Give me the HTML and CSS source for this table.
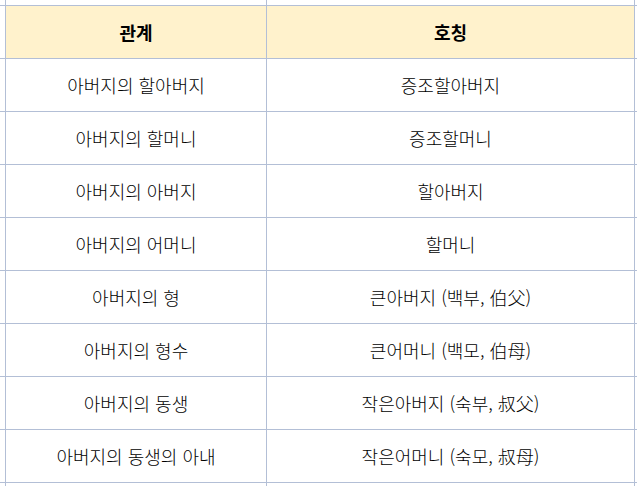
FILE: index.html
```html
<!DOCTYPE html>
<html lang="ko">
<head>
<meta charset="utf-8">
<title>호칭</title>
<link rel="stylesheet" href="styles.css">
</head>
<body>
<div class="sheet">
  <div class="cell"></div><div class="cell"></div><div class="cell"></div><div class="cell"></div>

  <div class="cell"></div><div class="cell head">관계</div><div class="cell head">호칭</div><div class="cell"></div>

  <div class="cell"></div><div class="cell">아버지의 할아버지</div><div class="cell">증조할아버지</div><div class="cell"></div>
  <div class="cell"></div><div class="cell">아버지의 할머니</div><div class="cell">증조할머니</div><div class="cell"></div>
  <div class="cell"></div><div class="cell">아버지의 아버지</div><div class="cell">할아버지</div><div class="cell"></div>
  <div class="cell"></div><div class="cell">아버지의 어머니</div><div class="cell">할머니</div><div class="cell"></div>
  <div class="cell"></div><div class="cell">아버지의 형</div><div class="cell">큰아버지 (백부, 伯父)</div><div class="cell"></div>
  <div class="cell"></div><div class="cell">아버지의 형수</div><div class="cell">큰어머니 (백모, 伯母)</div><div class="cell"></div>
  <div class="cell"></div><div class="cell">아버지의 동생</div><div class="cell">작은아버지 (숙부, 叔父)</div><div class="cell"></div>
  <div class="cell"></div><div class="cell">아버지의 동생의 아내</div><div class="cell">작은어머니 (숙모, 叔母)</div><div class="cell"></div>

  <div class="cell"></div><div class="cell"></div><div class="cell"></div><div class="cell"></div>
</div>
</body>
</html>
```

FILE: styles.css
```css
html, body {
  margin: 0;
  padding: 0;
  overflow: hidden;
  background: #ffffff;
}

.sheet {
  display: grid;
  grid-template-columns: 5px 260px 367px 1fr;
  grid-template-rows: 5px repeat(9, 52px) 3px;
  gap: 1px;
  background: #b3bfd6;
  width: 637px;
  font-family: "Noto Sans CJK KR", "Noto Sans", sans-serif;
  font-size: 18px;
  font-weight: 300;
  color: #000000;
}

.cell {
  background: #ffffff;
  display: flex;
  align-items: center;
  justify-content: center;
  white-space: nowrap;
  overflow: hidden;
}

.head {
  background: #fff2cc;
  font-weight: bold;
  font-size: 18px;
}
```
